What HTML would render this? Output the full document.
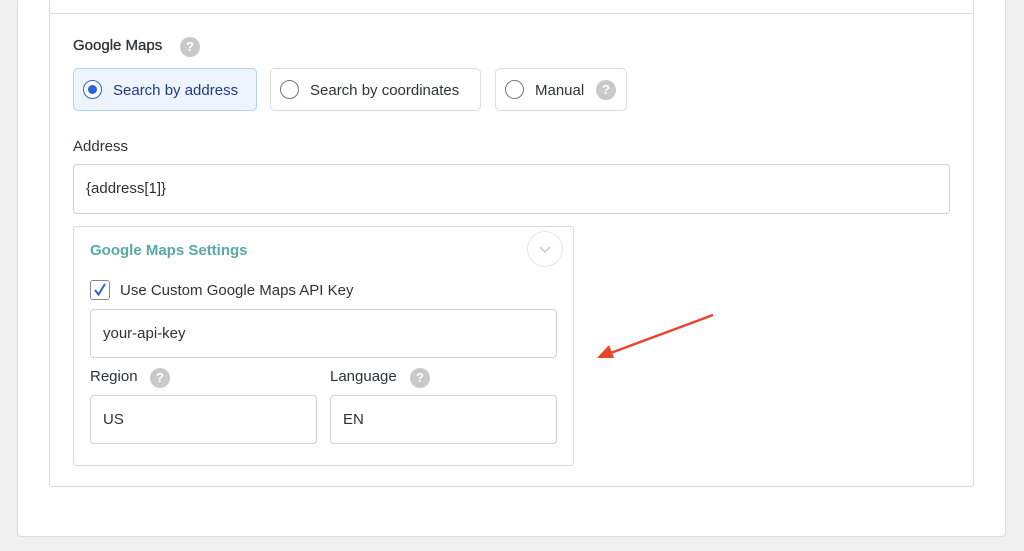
<!DOCTYPE html>
<html><head><meta charset="utf-8"><style>
*{box-sizing:border-box;margin:0;padding:0}
body{width:1024px;height:551px;background:#f0f0f1;font-family:"Liberation Sans",sans-serif;color:#2c3338;position:relative;overflow:hidden;font-size:14px}
.abs{position:absolute}
.panel{left:17px;top:-2px;width:989px;height:539px;background:#fff;border:1px solid #dcdcde;border-radius:4px}
.card{left:49px;top:-5px;width:925px;height:492px;background:#fff;border:1px solid #dcdcde;border-radius:0 0 3px 3px}
.help{width:18px;height:18px;border-radius:50%;background:#c9c9c9;color:#fff;font-weight:bold;font-size:13px;text-align:center;line-height:18px}
.rb{height:43px;border:1px solid #dcdcde;border-radius:5px;background:#fff}
.rc{width:19px;height:19px;border-radius:50%;border:1.5px solid #777;background:#fff}
.inp{border:1px solid #d0d0d3;border-radius:4px;background:#fff;font-size:15px;line-height:48px;padding-left:12px;color:#2c3338}
</style></head><body>
<div class="abs panel"></div>
<div class="abs card"></div>
<div class="abs" style="left:50px;top:13px;width:923px;height:1px;background:#dcdcde"></div>
<div class="abs" style="left:73px;top:37px;font-size:15px;color:#2c3338;-webkit-text-stroke:0.3px #2c3338">Google Maps</div>
<div class="abs help" style="left:180px;top:37px;width:20px;height:20px;line-height:20px">?</div>

<div class="abs rb" style="left:73px;top:68px;width:184px;background:#edf4fd;border-color:#b7cff3"></div>
<div class="abs rc" style="left:83px;top:80px;border-color:#2a62d9;"><div style="width:9px;height:9px;border-radius:50%;background:#2a62d9;margin:3.5px"></div></div>
<div class="abs" style="left:113px;top:82px;color:#1e3a8a;font-size:15px">Search by address</div>

<div class="abs rb" style="left:270px;top:68px;width:211px"></div>
<div class="abs rc" style="left:280px;top:80px"></div>
<div class="abs" style="left:310px;top:82px;font-size:15px">Search by coordinates</div>

<div class="abs rb" style="left:495px;top:68px;width:132px"></div>
<div class="abs rc" style="left:505px;top:80px"></div>
<div class="abs" style="left:535px;top:82px;font-size:15px">Manual</div>
<div class="abs help" style="left:596px;top:80px;width:20px;height:20px;line-height:20px">?</div>

<div class="abs" style="left:73px;top:138px;font-size:15px">Address</div>
<div class="abs inp" style="left:73px;top:164px;width:877px;height:50px">{address[1]}</div>

<div class="abs" style="left:73px;top:226px;width:501px;height:240px;border:1px solid #dcdcde;border-radius:3px"></div>
<div class="abs" style="left:90px;top:242px;font-size:15px;font-weight:bold;color:#57a8a8">Google Maps Settings</div>
<div class="abs" style="left:527px;top:231px;width:36px;height:36px;border-radius:50%;border:1.5px solid #e6e6e6"></div>
<svg class="abs" style="left:537px;top:243px" width="16" height="12"><path d="M3 4 L8 9 L13 4" fill="none" stroke="#ccc" stroke-width="1.5"/></svg>

<div class="abs" style="left:90px;top:280px;width:20px;height:20px;border:1.5px solid #888;border-radius:3px;background:#fff"></div>
<svg class="abs" style="left:90px;top:280px" width="20" height="20"><path d="M5 10 L8.5 14.5 L15 4" fill="none" stroke="#2a62d9" stroke-width="2"/></svg>
<div class="abs" style="left:120px;top:282px;font-size:15px">Use Custom Google Maps API Key</div>
<div class="abs inp" style="left:90px;top:309px;width:467px;height:49px">your-api-key</div>

<div class="abs" style="left:90px;top:368px;font-size:15px">Region</div>
<div class="abs help" style="left:150px;top:368px;width:20px;height:20px;line-height:20px">?</div>
<div class="abs" style="left:330px;top:368px;font-size:15px">Language</div>
<div class="abs help" style="left:410px;top:368px;width:20px;height:20px;line-height:20px">?</div>
<div class="abs inp" style="left:90px;top:395px;width:227px;height:49px">US</div>
<div class="abs inp" style="left:330px;top:395px;width:227px;height:49px">EN</div>

<svg class="abs" style="left:590px;top:310px" width="130" height="55"><path d="M123 5 L18 44" stroke="#e8452c" stroke-width="2.5" fill="none"/><path d="M7 48 L19 35 L24 48 Z" fill="#e8452c"/></svg>
</body></html>
